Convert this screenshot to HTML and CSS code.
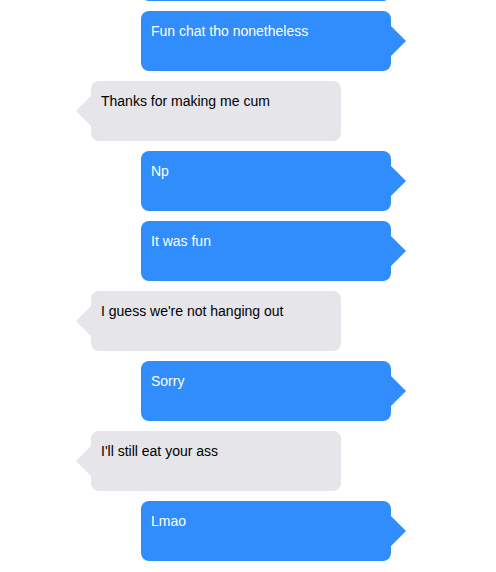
FILE: index.html
```html
<!DOCTYPE html>
<html lang="en">
<head>
    <meta charset="UTF-8">
    <meta name="viewport" content="width=device-width, initial-scale=1.0">
    <title>Chat</title>
    <link rel="stylesheet" href="styles.css">
</head>
<body>
    <div class="chat">
        <div class="bubble sent"></div>
        <div class="bubble sent">Fun chat tho nonetheless</div>
        <div class="bubble received">Thanks for making me cum</div>
        <div class="bubble sent">Np</div>
        <div class="bubble sent">It was fun</div>
        <div class="bubble received">I guess we're not hanging out</div>
        <div class="bubble sent">Sorry</div>
        <div class="bubble received">I'll still eat your ass</div>
        <div class="bubble sent">Lmao</div>
    </div>
</body>
</html>
```

FILE: styles.css
```css
body {
    margin: 0;
    background-color: #fff;
    font-family: "Liberation Sans", Arial, sans-serif;
    overflow: hidden;
}
.chat {
    display: flex;
    flex-direction: column;
    gap: 10px;
    width: 300px;
    margin-top: -59px;
    margin-left: 91px;
}
.bubble {
    position: relative;
    box-sizing: border-box;
    width: 250px;
    height: 60px;
    padding: 10px;
    border-radius: 8px;
    font-size: 14px;
    line-height: 20px;
}
.bubble::after {
    content: "";
    position: absolute;
    top: 15px;
    border-top: 15px solid transparent;
    border-bottom: 15px solid transparent;
}
.sent {
    align-self: flex-end;
    background-color: #318cfc;
    color: #fff;
}
.sent::after {
    left: 100%;
    border-left: 15px solid #318cfc;
}
.received {
    align-self: flex-start;
    background-color: #e5e5ea;
    color: #000;
}
.received::after {
    right: 100%;
    border-right: 15px solid #e5e5ea;
}
```
